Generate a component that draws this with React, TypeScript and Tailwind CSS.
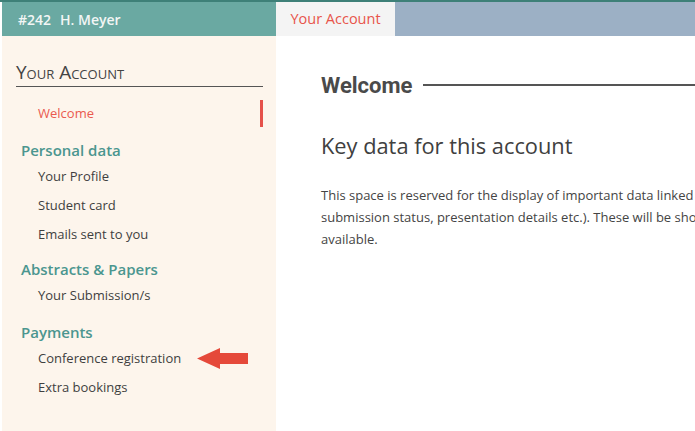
import React from 'react';

const sections = [
  { title: 'Personal data', items: ['Your Profile', 'Student card', 'Emails sent to you'] },
  { title: 'Abstracts & Papers', items: ['Your Submission/s'] },
  { title: 'Payments', items: ['Conference registration', 'Extra bookings'] },
];

const Arrow = () => (
  <svg width="51" height="21" viewBox="0 0 51 21" className="ml-[16px] shrink-0">
    <polygon points="0,10.5 23,0 23,5 51,5 51,16 23,16 23,21" fill="#e5493a" />
  </svg>
);

export default function App() {
  return (
    <div className="w-[695px] h-[431px] overflow-hidden bg-white font-['Open_Sans',sans-serif] border-t-2 border-[#3e8078]">
      {/* header */}
      <div className="flex h-[34px] pl-[2px]">
        <div className="w-[274px] shrink-0 bg-[#6aa9a2] text-[#f3f6f5] text-[14px] font-semibold flex items-center pl-[16px]">
          <span>#242</span>
          <span className="ml-[9px]">H. Meyer</span>
        </div>
        <div className="w-[119px] shrink-0 bg-[#f4f4f4] text-[#e8554b] text-[14.5px] flex items-center justify-center">
          Your Account
        </div>
        <div className="flex-1 bg-[#9cb0c5]" />
      </div>

      <div className="flex h-[395px] pl-[2px]">
        {/* sidebar */}
        <div className="w-[274px] shrink-0 bg-[#fdf5ec] pl-[14px] pr-[13px] pt-[24px]">
          <div className="text-[19px] leading-[25px] pb-[1px] text-[#444] [font-variant:small-caps] border-b border-[#555]">
            Your Account
          </div>
          <div className="mt-[13px] h-[27px] flex items-center justify-between">
            <span className="pl-[22px] text-[13px] text-[#ea5a4f]">Welcome</span>
            <span className="w-[3px] h-[27px] bg-[#e5514a]" />
          </div>
          {sections.map((s, i) => (
            <div key={s.title} className={i === 0 ? 'mt-[11px]' : i === 1 ? 'mt-[8px]' : 'mt-[10px]'}>
              <div className="h-[24px] leading-[24px] pl-[5px] text-[15px] font-semibold text-[#4b968f]">
                {s.title}
              </div>
              {s.items.map((it) => (
                <div key={it} className="h-[29px] flex items-center pl-[22px] text-[13px] text-[#3f3f3f] whitespace-nowrap">
                  <span>{it}</span>
                  {it === 'Conference registration' && <Arrow />}
                </div>
              ))}
            </div>
          ))}
        </div>

        {/* main */}
        <div className="flex-1 min-w-0 overflow-hidden pl-[45px] pt-[35px] text-[#474747]">
          <div className="h-[28px] flex items-center">
            <span className="font-['Roboto',sans-serif] font-bold text-[22px] text-[#4a4a4a]">Welcome</span>
            <span className="flex-1 ml-[11px] h-[1.5px] bg-[#555]" />
          </div>
          <div className="mt-[32px] text-[21.8px] leading-[30px] text-[#404040]">Key data for this account</div>
          <div className="mt-[23px] text-[13px] leading-[22px] text-[#444] whitespace-nowrap">
            <div>This space is reserved for the display of important data linked to your account (e.g. payment status,</div>
            <div>submission status, presentation details etc.). These will be shown here as soon as they are</div>
            <div>available.</div>
          </div>
        </div>
      </div>
    </div>
  );
}
